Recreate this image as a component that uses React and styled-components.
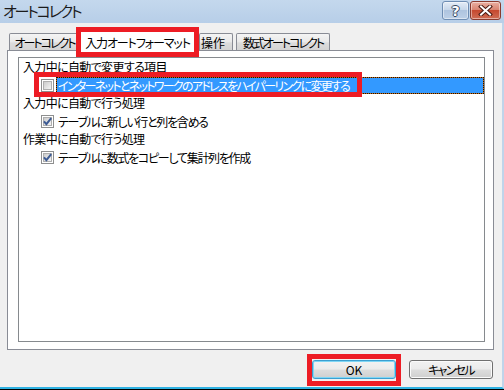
import React from 'react';
import styled, { createGlobalStyle } from 'styled-components';

const GlobalStyle = createGlobalStyle`
  html, body {
    margin: 0;
    padding: 0;
    background: #000;
  }
  body {
    font-family: "Noto Sans CJK JP", "Noto Sans", sans-serif;
    font-feature-settings: "palt" 1;
    font-size: 12px;
    color: #000;
  }
`;

const Window = styled.div`
  width: 504px;
  height: 390px;
  display: flex;
  flex-direction: column;
  padding-bottom: 1px;
  box-sizing: border-box;
  background: #000;
  overflow: hidden;
`;

const TitleBar = styled.div`
  height: 23px;
  flex: none;
  display: flex;
  align-items: flex-start;
  background: linear-gradient(#c4d8ed, #b7cee8);
  padding: 0 3px 0 3px;
  box-sizing: border-box;
`;

const Title = styled.div`
  flex: 1;
  font-size: 15px;
  line-height: 22px;
  color: #1b1b1b;
  letter-spacing: -2.2px;
`;

const CaptionButton = styled.div`
  margin-top: 1px;
  height: 19px;
  width: ${p => p.$w}px;
  box-sizing: border-box;
  border-radius: 3px;
  display: flex;
  align-items: center;
  justify-content: center;
  border: 1px solid ${p => (p.$close ? '#8a3a2e' : '#6e8db3')};
  background: ${p =>
    p.$close
      ? 'linear-gradient(#eab0a2, #d98572 45%, #c6492f 50%, #cf6d55)'
      : 'linear-gradient(#e4ecf6, #c7d7ea 45%, #aec4df 50%, #bdd0e7)'};
  box-shadow: inset 0 0 0 1px rgba(255, 255, 255, 0.45);
  & + & {
    margin-left: 1px;
  }
`;

const HelpMark = styled.span`
  font-family: "DejaVu Sans", sans-serif;
  font-weight: bold;
  font-size: 14px;
  line-height: 14px;
  color: #fff;
  text-shadow: 1px 0 0 #34475f, -1px 0 0 #34475f, 0 1px 0 #34475f, 0 -1px 0 #34475f;
`;

const Body = styled.div`
  flex: 1;
  display: flex;
  flex-direction: column;
  background: #f0f0f0;
  border-right: 2px solid #c0d4ea;
  border-bottom: 2px solid #2fb2e2;
`;

const TabStrip = styled.div`
  height: 27px;
  flex: none;
  display: flex;
  align-items: flex-end;
  padding-left: 9px;
  position: relative;
  z-index: 2;
`;

const Tab = styled.div`
  box-sizing: border-box;
  width: ${p => p.$w}px;
  height: 17px;
  margin-left: ${p => p.$ml || 0}px;
  padding-right: ${p => p.$pr || 0}px;
  display: flex;
  align-items: center;
  justify-content: center;
  border: 1px solid #898c95;
  border-bottom: none;
  border-radius: 2px 2px 0 0;
  background: linear-gradient(#f4f4f4, #e9e9e9 50%, #dcdcdc 55%, #d4d4d4);
  line-height: 15px;
  white-space: nowrap;
  overflow: hidden;
  letter-spacing: ${p => p.$ls || 0}px;
`;

const ActiveTab = styled.div`
  box-sizing: border-box;
  width: 123px;
  height: 30px;
  margin-left: -4px;
  margin-bottom: -7px;
  display: flex;
  align-items: center;
  justify-content: center;
  border: 5px solid #ed1c24;
  background: #fff;
  white-space: nowrap;
  letter-spacing: -1.1px;
`;

const Panel = styled.div`
  margin-left: 7px;
  width: 487px;
  height: 300px;
  flex: none;
  box-sizing: border-box;
  border: 1px solid #898c95;
  background: #fff;
  padding: 6px 8px 7px 10px;
  display: flex;
`;

const GroupBox = styled.div`
  flex: 1;
  border: 1px solid #868a8e;
  display: flex;
  flex-direction: column;
`;

const SectionLabel = styled.div`
  height: 18px;
  line-height: 17px;
  padding-left: 4px;
  white-space: nowrap;
  letter-spacing: -0.65px;
`;

const OptionRow = styled.div`
  height: 18px;
  display: flex;
  align-items: center;
  padding-left: 22px;
  position: relative;
`;

const CheckBox = styled.span`
  flex: none;
  width: 13px;
  height: 13px;
  box-sizing: border-box;
  border: 1px solid #8e8f8f;
  background: #fff;
  padding: 1px;
  display: flex;
`;

const CheckInner = styled.span`
  flex: 1;
  position: relative;
  border: 1px solid #aeaeae;
  background: linear-gradient(135deg, #cbcbcb, #f5f5f5);
  svg {
    position: absolute;
    left: -2px;
    top: -2px;
  }
`;

const OptionText = styled.span`
  flex: 1;
  margin-left: 2px;
  height: 17px;
  line-height: 15px;
  box-sizing: border-box;
  padding-left: 1px;
  white-space: nowrap;
  letter-spacing: ${p => p.$ls}px;
  border: 1px solid ${p => (p.$selected ? '#c86a10' : 'transparent')};
  outline: ${p => (p.$selected ? '1px dotted #111' : 'none')};
  outline-offset: -1px;
  background: ${p => (p.$selected ? '#3399ff' : 'transparent')};
  color: ${p => (p.$selected ? '#fff' : '#000')};
`;

const Annotation = styled.div`
  position: absolute;
  left: 15px;
  top: -4px;
  width: 328px;
  height: 25px;
  box-sizing: border-box;
  border: 5px solid #ed1c24;
  pointer-events: none;
`;

const Footer = styled.div`
  flex: 1;
  display: flex;
  justify-content: flex-end;
  align-items: flex-start;
  padding: 4px 9px 0 0;
`;

const MarkBox = styled.div`
  border: 5px solid #ed1c24;
  padding: 1px 0 2px 0;
  display: flex;
`;

const Button = styled.div`
  width: 84px;
  height: 19px;
  box-sizing: border-box;
  margin-top: ${p => p.$mt || 0}px;
  margin-left: ${p => p.$ml || 0}px;
  border: 1px solid ${p => (p.$focused ? '#3c9fd0' : '#707070')};
  border-radius: 3px;
  display: flex;
  align-items: center;
  justify-content: center;
  background: linear-gradient(#f2f2f2, #ebebeb 48%, #dddddd 52%, #cfcfcf);
  box-shadow: inset 0 0 0 1px ${p => (p.$focused ? '#7fd6f5' : '#fbfbfb')};
  line-height: 15px;
  letter-spacing: ${p => p.$ls || 0}px;
`;

const Check = () => (
  <svg width="11" height="11" viewBox="0 0 11 11">
    <path d="M2 5.4 L4.4 8.2 L9.2 2.2" fill="none" stroke="#3d5b94" strokeWidth="2" />
  </svg>
);

const CloseIcon = () => (
  <svg width="15" height="11" viewBox="0 0 15 11">
    <path d="M3 1.5 L12 9.5 M12 1.5 L3 9.5" stroke="#4a1a12" strokeWidth="4" strokeLinecap="square" />
    <path d="M3 1.5 L12 9.5 M12 1.5 L3 9.5" stroke="#fff" strokeWidth="2" strokeLinecap="square" />
  </svg>
);

const Option = ({ checked, selected, ls, children, marked }) => (
  <OptionRow>
    <CheckBox>
      <CheckInner>{checked && <Check />}</CheckInner>
    </CheckBox>
    <OptionText $selected={selected} $ls={ls}>{children}</OptionText>
    {marked && <Annotation />}
  </OptionRow>
);

export default function App() {
  return (
    <>
      <GlobalStyle />
      <Window>
        <TitleBar>
          <Title>オートコレクト</Title>
          <CaptionButton $w={27}>
            <HelpMark>?</HelpMark>
          </CaptionButton>
          <CaptionButton $w={31} $close>
            <CloseIcon />
          </CaptionButton>
        </TitleBar>
        <Body>
          <TabStrip>
            <Tab $w={71} $ls={-2}>オートコレクト</Tab>
            <ActiveTab>入力オートフォーマット</ActiveTab>
            <Tab $w={34} $pr={6}>操作</Tab>
            <Tab $w={94} $ml={3} $ls={-2}>数式オートコレクト</Tab>
          </TabStrip>
          <Panel>
            <GroupBox>
              <SectionLabel>入力中に自動で変更する項目</SectionLabel>
              <Option selected marked ls={-1.7}>
                インターネットとネットワークのアドレスをハイパーリンクに変更する
              </Option>
              <SectionLabel>入力中に自動で行う処理</SectionLabel>
              <Option checked ls={-1.3}>テーブルに新しい行と列を含める</Option>
              <SectionLabel>作業中に自動で行う処理</SectionLabel>
              <Option checked ls={-1.3}>テーブルに数式をコピーして集計列を作成</Option>
            </GroupBox>
          </Panel>
          <Footer>
            <MarkBox>
              <Button $focused>OK</Button>
            </MarkBox>
            <Button $mt={6} $ml={8} $ls={-1.7}>キャンセル</Button>
          </Footer>
        </Body>
      </Window>
    </>
  );
}
